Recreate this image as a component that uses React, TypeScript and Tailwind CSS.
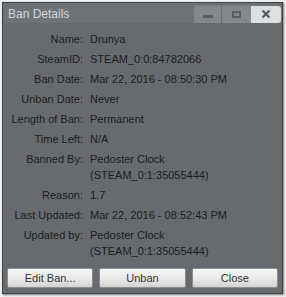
import React from 'react';

const rows: { label: string; value: string[] }[] = [
  { label: 'Name:', value: ['Drunya'] },
  { label: 'SteamID:', value: ['STEAM_0:0:84782066'] },
  { label: 'Ban Date:', value: ['Mar 22, 2016 - 08:50:30 PM'] },
  { label: 'Unban Date:', value: ['Never'] },
  { label: 'Length of Ban:', value: ['Permanent'] },
  { label: 'Time Left:', value: ['N/A'] },
  { label: 'Banned By:', value: ['Pedoster Clock', '(STEAM_0:1:35055444)'] },
  { label: 'Reason:', value: ['1.7'] },
  { label: 'Last Updated:', value: ['Mar 22, 2016 - 08:52:43 PM'] },
  { label: 'Updated by:', value: ['Pedoster Clock', '(STEAM_0:1:35055444)'] },
];

function DialogButton({ children }: { children: React.ReactNode }) {
  return (
    <button className="flex-1 h-[20px] rounded-[2px] border border-[#8a8d90] bg-gradient-to-b from-[#f6f6f6] via-[#e9e9e9] to-[#d4d4d4] text-[11px] text-[#333] leading-none shadow-[inset_0_1px_0_#ffffff]">
      {children}
    </button>
  );
}

export default function App() {
  return (
    <div
      className="w-[286px] h-[297px] bg-[#f2f2f2] pt-[2px] pl-[2px] overflow-hidden"
      style={{ fontFamily: '"Liberation Sans", Arial, sans-serif' }}
    >
      <div className="w-[281px] h-[292px] border border-[#3e4144] bg-[#676b6f] shadow-[1px_1px_2px_rgba(0,0,0,0.5)] flex flex-col">
        {/* Title bar */}
        <div className="h-[20px] bg-[#6f7377] flex items-center justify-between pl-[5px] pr-[1px] pt-[2px]">
          <span className="text-[12px] text-[#d3d6d8] leading-none">Ban Details</span>
          <div className="flex h-[17px]">
            <div className="w-[28px] bg-[#84888b] rounded-l-[3px] flex items-center justify-center border-r border-[#6a6e71]">
              <div className="w-[10px] h-[3px] bg-[#5a5e61] mt-[4px]" />
            </div>
            <div className="w-[29px] bg-[#84888b] flex items-center justify-center">
              <div className="w-[9px] h-[7px] border-2 border-[#5a5e61]" />
            </div>
            <div className="w-[30px] bg-[#dedfe0] rounded-r-[3px] flex items-center justify-center">
              <svg width="10" height="10" viewBox="0 0 10 10">
                <path d="M1.5 1.5 L8.5 8.5 M8.5 1.5 L1.5 8.5" stroke="#555a5e" strokeWidth="2.2" />
              </svg>
            </div>
          </div>
        </div>

        {/* Details */}
        <div className="flex-1 pt-[8px] text-[11px] text-[#1c1c1c]">
          {rows.map((r) => (
            <div key={r.label} className="flex mb-[4px]">
              <div className="w-[80px] text-right leading-[16px] shrink-0">{r.label}</div>
              <div className="pl-[7px] leading-[16px]">
                {r.value.map((v) => (
                  <div key={v}>{v}</div>
                ))}
              </div>
            </div>
          ))}
        </div>

        {/* Buttons */}
        <div className="flex gap-[6px] px-[4px] pb-[5px]">
          <DialogButton>Edit Ban...</DialogButton>
          <DialogButton>Unban</DialogButton>
          <DialogButton>Close</DialogButton>
        </div>
      </div>
    </div>
  );
}
